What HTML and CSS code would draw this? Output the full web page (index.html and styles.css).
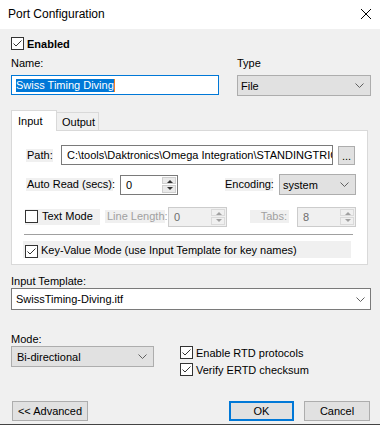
FILE: index.html
```html
<!DOCTYPE html>
<html lang="en">
<head>
<meta charset="UTF-8">
<title>Port Configuration</title>
<link rel="stylesheet" href="styles.css">
</head>
<body>
<div class="window">
    <div class="titlebar">
        <span class="title">Port Configuration</span>
        <svg class="close" width="10" height="10" viewBox="0 0 10 10"><path d="M0 0L10 10M10 0L0 10" stroke="#000" stroke-width="1"/></svg>
    </div>
    <div class="content">
        <div class="check-row enabled">
            <span class="box"><svg width="11" height="11" viewBox="0 0 11 11"><polyline points="1.5,5.5 4,8 9.5,2.5" fill="none" stroke="#333" stroke-width="1"/></svg></span>
            <b>Enabled</b>
        </div>

        <div class="top-fields">
            <div class="name-field">
                <div class="lbl">Name:</div>
                <div class="textbox focused"><span class="sel">Swiss Timing Diving</span><span class="caret"></span></div>
            </div>
            <div class="type-field">
                <div class="lbl">Type</div>
                <div class="combo">File<svg class="chev" width="9" height="5" viewBox="0 0 9 5"><polyline points="0.5,0.5 4.5,4.5 8.5,0.5" fill="none" stroke="#606060"/></svg></div>
            </div>
        </div>

        <div class="tabs">
            <div class="tab active">Input</div>
            <div class="tab">Output</div>
        </div>
        <div class="tab-panel">
            <div class="row path-row">
                <span class="plabel path-lbl">Path:</span>
                <div class="textbox path-box">C:\tools\Daktronics\Omega Integration\STANDINGTRIC</div>
                <div class="btn dots">...</div>
            </div>
            <div class="row auto-row">
                <span class="plabel auto-lbl">Auto Read (secs):</span>
                <div class="spin auto-spin"><span class="val">0</span><span class="arrows"><i class="up"></i><i class="down"></i></span></div>
                <span class="plabel enc-lbl">Encoding:</span>
                <div class="combo enc-combo">system<svg class="chev" width="9" height="5" viewBox="0 0 9 5"><polyline points="0.5,0.5 4.5,4.5 8.5,0.5" fill="none" stroke="#606060"/></svg></div>
            </div>
            <div class="row text-row">
                <div class="plabel tm-group">
                    <span class="box"></span>
                    <span class="tm-text">Text Mode</span>
                </div>
                <span class="plabel dis ll-lbl">Line Length:</span>
                <div class="spin disabled ll-spin"><span class="val">0</span><span class="arrows"><i class="up"></i><i class="down"></i></span></div>
                <span class="plabel dis tabs-lbl">Tabs:</span>
                <div class="spin disabled tabs-spin"><span class="val">8</span><span class="arrows"><i class="up"></i><i class="down"></i></span></div>
            </div>
            <div class="separator"></div>
            <div class="row kv-row">
                <span class="box"><svg width="11" height="11" viewBox="0 0 11 11"><polyline points="1.5,5.5 4,8 9.5,2.5" fill="none" stroke="#333" stroke-width="1"/></svg></span>
                <span class="kv-text">Key-Value Mode (use Input Template for key names)</span>
            </div>
        </div>

        <div class="lbl tmpl-lbl">Input Template:</div>
        <div class="combo edit tmpl-combo">SwissTiming-Diving.itf<svg class="chev" width="9" height="5" viewBox="0 0 9 5"><polyline points="0.5,0.5 4.5,4.5 8.5,0.5" fill="none" stroke="#606060"/></svg></div>

        <div class="mode-row">
            <div class="mode-field">
                <div class="lbl">Mode:</div>
                <div class="combo mode-combo">Bi-directional<svg class="chev" width="9" height="5" viewBox="0 0 9 5"><polyline points="0.5,0.5 4.5,4.5 8.5,0.5" fill="none" stroke="#606060"/></svg></div>
            </div>
            <div class="mode-checks">
                <div class="check-row">
                    <span class="box"><svg width="11" height="11" viewBox="0 0 11 11"><polyline points="1.5,5.5 4,8 9.5,2.5" fill="none" stroke="#333" stroke-width="1"/></svg></span>
                    <span>Enable RTD protocols</span>
                </div>
                <div class="check-row">
                    <span class="box"><svg width="11" height="11" viewBox="0 0 11 11"><polyline points="1.5,5.5 4,8 9.5,2.5" fill="none" stroke="#333" stroke-width="1"/></svg></span>
                    <span>Verify ERTD checksum</span>
                </div>
            </div>
        </div>

        <div class="buttons">
            <div class="btn adv">&lt;&lt; Advanced</div>
            <div class="btn ok">OK</div>
            <div class="btn cancel">Cancel</div>
        </div>
    </div>
</div>
</body>
</html>
```

FILE: styles.css
```css
*{
    box-sizing: border-box;
}
body{
    margin: 0;
    font-family: "Liberation Sans", Arial, sans-serif;
    font-size: 11px;
    color: #000;
    white-space: nowrap;
}
.window{
    width: 380px;
    height: 425px;
    background: #f0f0f0;
    border-bottom: 1px solid #444;
}
.titlebar{
    height: 29px;
    background: #fff;
    display: flex;
    align-items: center;
    justify-content: space-between;
    padding: 0 9px 2px 8px;
}
.title{
    font-size: 12px;
}
.close{
    display: block;
}
.content{
    padding: 0 9px 0 11px;
}

/* checkbox */
.box{
    width: 13px;
    height: 13px;
    border: 1px solid #333;
    background: #fff;
    display: flex;
    align-items: center;
    justify-content: center;
    flex: none;
}
.box svg{
    display: block;
}
.check-row{
    display: flex;
    align-items: center;
    height: 13px;
}
.check-row .box{
    margin-right: 3px;
}
.enabled{
    margin-top: 8px;
}
.enabled b{
    font-size: 11px;
}

.lbl{
    height: 14px;
    line-height: 14px;
}
.top-fields{
    display: flex;
    margin-top: 6px;
}
.top-fields .lbl{
    margin-bottom: 5px;
}
.name-field{
    width: 208px;
}
.type-field{
    width: 134px;
    margin-left: 18px;
}

.textbox{
    height: 20px;
    background: #fff;
    border: 1px solid #7a7a7a;
    display: flex;
    align-items: center;
    overflow: hidden;
}
.textbox.focused{
    border-color: #0078d7;
    padding-left: 4px;
}
.sel{
    background: #0078d7;
    color: #fff;
    height: 13px;
    line-height: 13px;
}
.caret{
    width: 1px;
    height: 13px;
    background: #f58220;
}

.combo{
    height: 21px;
    background: #e1e1e1;
    border: 1px solid #adadad;
    display: flex;
    align-items: center;
    padding-left: 3px;
    padding-right: 6px;
}
.combo .chev{
    margin-left: auto;
}
.combo.edit{
    background: #fff;
    border-color: #7a7a7a;
}

/* tabs */
.tabs{
    display: flex;
    align-items: flex-end;
    height: 20px;
    margin-top: 14px;
}
.tab{
    height: 18px;
    line-height: 18px;
    border: 1px solid #d9d9d9;
    border-bottom: none;
    background: #f0f0f0;
    padding-left: 5px;
    width: 43px;
    margin-left: -1px;
}
.tab.active{
    height: 21px;
    line-height: 20px;
    width: 46px;
    margin: 0 0 -1px 0;
    background: #fff;
    padding-left: 6px;
    position: relative;
    z-index: 1;
}
.tab-panel{
    width: 357px;
    height: 135px;
    background: #fff;
    border: 1px solid #d9d9d9;
    padding-left: 13px;
}
.row{
    display: flex;
    align-items: center;
}
.plabel{
    background: #f0f0f0;
    height: 13px;
    line-height: 13px;
    flex: none;
}
.path-row{
    margin-top: 14px;
    height: 20px;
}
.path-lbl{
    margin-left: 1px;
    width: 27px;
    padding-left: 1px;
}
.path-box{
    margin-left: 8px;
    width: 272px;
    padding-left: 5px;
}
.btn{
    background: #e1e1e1;
    border: 1px solid #adadad;
    display: flex;
    align-items: center;
    justify-content: center;
    flex: none;
}
.dots{
    margin-left: 5px;
    width: 17px;
    height: 19px;
    padding-top: 2px;
}

.auto-row{
    margin-top: 9px;
    height: 21px;
}
.auto-lbl{
    margin-left: 1px;
    width: 87px;
    padding-left: 1px;
}
.spin{
    height: 20px;
    background: #fff;
    border: 1px solid #7a7a7a;
    display: flex;
    align-items: center;
    padding-left: 5px;
    flex: none;
}
.spin .arrows{
    margin-left: auto;
    width: 15px;
    height: 18px;
    display: flex;
    flex-direction: column;
    gap: 1px;
    padding: 1px 1px 1px 0;
}
.arrows i{
    flex: 1;
    background: #eaeaea;
    border: 1px solid #cfcfcf;
    position: relative;
}
.arrows i::after{
    content: "";
    position: absolute;
    left: 4px;
    top: 2px;
    border-left: 3px solid transparent;
    border-right: 3px solid transparent;
}
.arrows .up::after{
    border-bottom: 3px solid #333;
}
.arrows .down::after{
    top: 1px;
    border-top: 3px solid #333;
}
.auto-spin{
    margin-left: 7px;
    width: 58px;
}
.enc-lbl{
    margin-left: 47px;
    width: 48px;
}
.enc-combo{
    margin-left: 6px;
    width: 77px;
}

.text-row{
    margin-top: 12px;
    height: 19px;
}
.tm-group{
    display: flex;
    align-items: center;
    width: 75px;
    height: 16px;
}
.tm-text{
    margin-left: 4px;
}
.dis{
    color: #a0a0a0;
}
.ll-lbl{
    margin-left: 5px;
    width: 60px;
    padding-left: 2px;
}
.spin.disabled{
    background: #f0f0f0;
    border-color: #cccccc;
    color: #6d6d6d;
}
.disabled .arrows i{
    background: #f0f0f0;
    border-color: #dadada;
}
.disabled .arrows i::after{
    border-bottom-color: #a0a0a0;
    border-top-color: #a0a0a0;
}
.ll-spin{
    margin-left: 3px;
    width: 59px;
}
.tabs-lbl{
    margin-left: 23px;
    width: 39px;
    text-align: right;
    padding-right: 2px;
}
.tabs-spin{
    margin-left: 8px;
    width: 59px;
}
.separator{
    margin: 8px 0 0 -1px;
    width: 329px;
    height: 1px;
    background: #a0a0a0;
}
.kv-row{
    margin: 6px 0 0 -2px;
    width: 328px;
    height: 17px;
    background: #f0f0f0;
    padding-left: 2px;
    align-items: flex-end;
}
.kv-text{
    margin-left: 3px;
    line-height: 14px;
    padding-bottom: 1px;
}

.tmpl-lbl{
    margin-top: 9px;
}
.tmpl-combo{
    height: 22px;
    padding-left: 4px;
    padding-right: 5px;
}

.mode-row{
    display: flex;
    margin-top: 22px;
}
.mode-field{
    width: 143px;
}
.mode-combo{
    padding-left: 5px;
}
.mode-checks{
    margin: 14px 0 0 26px;
    display: flex;
    flex-direction: column;
    gap: 4px;
}

.buttons{
    display: flex;
    margin-top: 25px;
    height: 20px;
}
.buttons .btn{
    height: 20px;
}
.adv{
    margin-left: 1px;
    width: 76px;
}
.ok{
    margin-left: auto;
    width: 65px;
    border: 2px solid #0078d7;
}
.cancel{
    margin-left: 10px;
    margin-right: 1px;
    width: 66px;
}
```
